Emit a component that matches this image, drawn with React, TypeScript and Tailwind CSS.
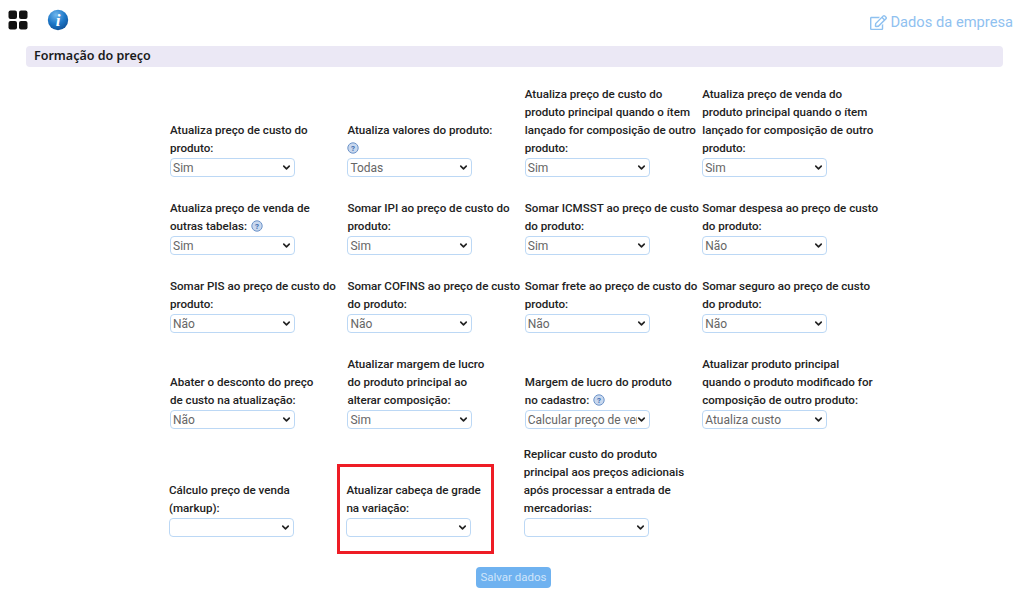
import { FaRegEdit } from "react-icons/fa"
import { ChevronDown } from "lucide-react"

type Field = {
  lines: string[]
  value: string
  help?: "inline" | "below"
}

const rows: Field[][] = [
  [
    { lines: ["Atualiza preço de custo do", "produto:"], value: "Sim" },
    { lines: ["Atualiza valores do produto:"], value: "Todas", help: "below" },
    {
      lines: ["Atualiza preço de custo do", "produto principal quando o ítem", "lançado for composição de outro", "produto:"],
      value: "Sim",
    },
    {
      lines: ["Atualiza preço de venda do", "produto principal quando o ítem", "lançado for composição de outro", "produto:"],
      value: "Sim",
    },
  ],
  [
    { lines: ["Atualiza preço de venda de", "outras tabelas:"], value: "Sim", help: "inline" },
    { lines: ["Somar IPI ao preço de custo do", "produto:"], value: "Sim" },
    { lines: ["Somar ICMSST ao preço de custo", "do produto:"], value: "Sim" },
    { lines: ["Somar despesa ao preço de custo", "do produto:"], value: "Não" },
  ],
  [
    { lines: ["Somar PIS ao preço de custo do", "produto:"], value: "Não" },
    { lines: ["Somar COFINS ao preço de custo", "do produto:"], value: "Não" },
    { lines: ["Somar frete ao preço de custo do", "produto:"], value: "Não" },
    { lines: ["Somar seguro ao preço de custo", "do produto:"], value: "Não" },
  ],
  [
    { lines: ["Abater o desconto do preço", "de custo na atualização:"], value: "Não" },
    { lines: ["Atualizar margem de lucro", "do produto principal ao", "alterar composição:"], value: "Sim" },
    { lines: ["Margem de lucro do produto", "no cadastro:"], value: "Calcular preço de venda", help: "inline" },
    {
      lines: ["Atualizar produto principal", "quando o produto modificado for", "composição de outro produto:"],
      value: "Atualiza custo",
    },
  ],
]

const lastRow: Field[] = [
  { lines: ["Cálculo preço de venda", "(markup):"], value: "" },
  { lines: ["Atualizar cabeça de grade", "na variação:"], value: "" },
  {
    lines: ["Replicar custo do produto", "principal aos preços adicionais", "após processar a entrada de", "mercadorias:"],
    value: "",
  },
]

function HelpIcon() {
  return (
    <svg width="12" height="12" viewBox="0 0 12 12" className="inline-block align-[-2px]">
      <circle cx="6" cy="6" r="5.2" fill="#c9d8ee" stroke="#6d94c9" strokeWidth="1" />
      <text x="6" y="8.8" textAnchor="middle" fontSize="8" fontWeight="700" fill="#3f6fb0" fontFamily="Roboto, sans-serif">
        ?
      </text>
    </svg>
  )
}

function InfoIcon() {
  return (
    <svg width="22" height="22" viewBox="0 0 22 22">
      <defs>
        <radialGradient id="globe" cx="40%" cy="25%" r="80%">
          <stop offset="0%" stopColor="#6fb6ec" />
          <stop offset="55%" stopColor="#1e78c8" />
          <stop offset="100%" stopColor="#0d4f96" />
        </radialGradient>
      </defs>
      <circle cx="11" cy="11" r="10.2" fill="url(#globe)" />
      <text x="11" y="17" textAnchor="middle" fontSize="17" fontWeight="700" fontStyle="italic" fill="#ffffff" fontFamily="'Liberation Serif', serif">
        i
      </text>
    </svg>
  )
}

function GridIcon() {
  return (
    <svg width="20" height="20" viewBox="0 0 20 20" fill="#111111">
      <rect x="0.5" y="0.5" width="8.5" height="8.5" rx="2" />
      <rect x="11" y="0.5" width="8.5" height="8.5" rx="2" />
      <rect x="0.5" y="11" width="8.5" height="8.5" rx="2" />
      <rect x="11" y="11" width="8.5" height="8.5" rx="2" />
    </svg>
  )
}

function FieldCell({ field }: { field: Field }) {
  return (
    <div className="flex flex-col items-start">
      <label className="text-[11.6px] leading-[18px] font-medium text-[#222222] whitespace-nowrap">
        {field.lines.map((line, i) => (
          <div key={i}>
            {line}
            {field.help === "inline" && i === field.lines.length - 1 && (
              <span className="ml-1">
                <HelpIcon />
              </span>
            )}
          </div>
        ))}
        {field.help === "below" && (
          <div>
            <HelpIcon />
          </div>
        )}
      </label>
      <div className="relative mt-[1px] h-[19px] w-[125px]">
        <select
          defaultValue={field.value}
          className="block h-full w-full appearance-none rounded-[4px] border border-[#bcd8f5] bg-white pl-[2px] pr-[12px] text-[12px] text-[#666666]"
        >
          <option value={field.value}>{field.value}</option>
        </select>
        <ChevronDown size={11} strokeWidth={3.5} className="pointer-events-none absolute right-[3px] top-[4px] text-[#222222]" />
      </div>
    </div>
  )
}

export default function App() {
  return (
    <div className="relative h-[599px] w-[1024px] overflow-hidden bg-white font-['Roboto',sans-serif]">
      <div className="flex h-[46px] items-start justify-between pl-[8px] pr-[11px] pt-[9px]">
        <div className="flex items-center gap-[19px]">
          <GridIcon />
          <InfoIcon />
        </div>
        <div className="mt-[2px] flex items-center gap-[3px] text-[14.7px] text-[#8fc1f0]">
          <FaRegEdit size={17} />
          Dados da empresa
        </div>
      </div>

      <div className="mx-[26px] h-[21px] w-[977px] rounded-[4px] bg-[#ebe8f5] pl-[8px] font-['Noto_Sans',sans-serif] text-[12.5px] font-semibold leading-[20px] text-[#1a1a1a]">
        Formação do preço
      </div>

      <div className="ml-[170px] mt-[18px] grid w-[710px] grid-cols-[177.4px_177.4px_177.4px_177.4px] items-end gap-y-[22px]">
        {rows.flat().map((field, i) => (
          <FieldCell key={i} field={field} />
        ))}
      </div>

      <div className="ml-[169px] mt-[16px] grid w-[710px] grid-cols-[177.4px_177.4px_177.4px_177.4px] items-end">
        {lastRow.map((field, i) => (
          <FieldCell key={i} field={field} />
        ))}
      </div>

      <div className="mt-[30px] flex justify-center pl-[3px]">
        <button className="h-[21px] w-[75px] rounded-[4px] bg-[#6fb2f0] text-[11.5px] text-[#cfe5fa]">Salvar dados</button>
      </div>

      {/* red highlight drawn over the screenshot */}
      <div className="absolute left-[337px] top-[464px] h-[90px] w-[157px] border-[3px] border-[#ee1c25]" />
    </div>
  )
}
